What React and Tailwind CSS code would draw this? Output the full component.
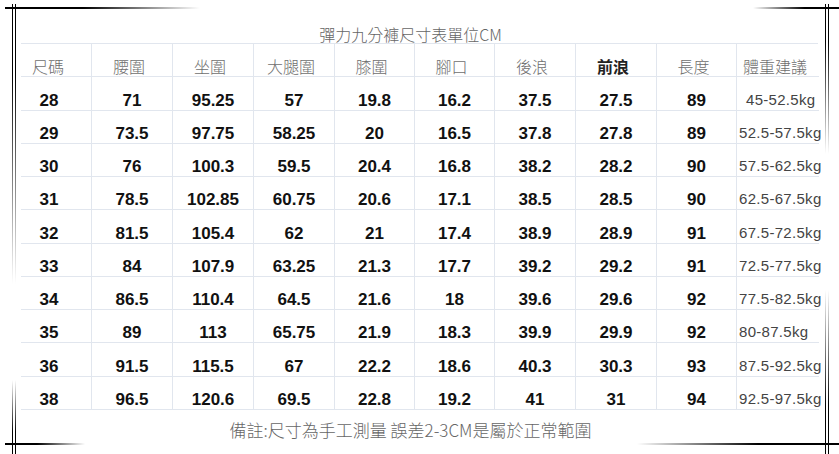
const headers = ['尺碼', '腰圍', '坐圍', '大腿圍', '膝圍', '腳口', '後浪', '前浪', '長度', '體重建議']

const rows = [
  ['28', '71', '95.25', '57', '19.8', '16.2', '37.5', '27.5', '89', '45-52.5kg'],
  ['29', '73.5', '97.75', '58.25', '20', '16.5', '37.8', '27.8', '89', '52.5-57.5kg'],
  ['30', '76', '100.3', '59.5', '20.4', '16.8', '38.2', '28.2', '90', '57.5-62.5kg'],
  ['31', '78.5', '102.85', '60.75', '20.6', '17.1', '38.5', '28.5', '90', '62.5-67.5kg'],
  ['32', '81.5', '105.4', '62', '21', '17.4', '38.9', '28.9', '91', '67.5-72.5kg'],
  ['33', '84', '107.9', '63.25', '21.3', '17.7', '39.2', '29.2', '91', '72.5-77.5kg'],
  ['34', '86.5', '110.4', '64.5', '21.6', '18', '39.6', '29.6', '92', '77.5-82.5kg'],
  ['35', '89', '113', '65.75', '21.9', '18.3', '39.9', '29.9', '92', '80-87.5kg'],
  ['36', '91.5', '115.5', '67', '22.2', '18.6', '40.3', '30.3', '93', '87.5-92.5kg'],
  ['38', '96.5', '120.6', '69.5', '22.8', '19.2', '41', '31', '94', '92.5-97.5kg'],
]

const cjk = { fontFamily: '"Noto Sans CJK TC", "Noto Sans CJK SC", sans-serif' }
const num = { fontFamily: '"Liberation Sans", Arial, sans-serif' }

// decorative corner frame, drawn over the whole page
function Frame() {
  return (
    <svg className="absolute inset-0 pointer-events-none" width="839" height="454" viewBox="0 0 839 454">
      <defs>
        <linearGradient id="toR" x1="0" x2="1" y1="0" y2="0">
          <stop offset="0.4" stopColor="#000" />
          <stop offset="1" stopColor="#000" stopOpacity="0" />
        </linearGradient>
        <linearGradient id="toL" x1="1" x2="0" y1="0" y2="0">
          <stop offset="0.4" stopColor="#000" />
          <stop offset="1" stopColor="#000" stopOpacity="0" />
        </linearGradient>
        <linearGradient id="toB" x1="0" x2="0" y1="0" y2="1">
          <stop offset="0.25" stopColor="#000" />
          <stop offset="1" stopColor="#000" stopOpacity="0" />
        </linearGradient>
        <linearGradient id="toT" x1="0" x2="0" y1="1" y2="0">
          <stop offset="0.3" stopColor="#000" />
          <stop offset="1" stopColor="#000" stopOpacity="0" />
        </linearGradient>
      </defs>
      {/* top left */}
      <rect x="5" y="7" width="195" height="2" fill="url(#toR)" />
      <rect x="12" y="4" width="1" height="280" fill="url(#toB)" />
      <rect x="15" y="4" width="1" height="280" fill="url(#toB)" />
      {/* bottom left */}
      <rect x="5" y="443" width="80" height="2" fill="url(#toR)" />
      <rect x="12" y="380" width="1" height="74" fill="url(#toT)" />
      <rect x="15" y="380" width="1" height="74" fill="url(#toT)" />
      {/* top right */}
      <rect x="753" y="7" width="86" height="2" fill="url(#toL)" />
      <rect x="825" y="4" width="1" height="150" fill="url(#toB)" />
      <rect x="828" y="4" width="1" height="150" fill="url(#toB)" />
      {/* bottom right */}
      <rect x="637" y="443" width="202" height="2" fill="url(#toL)" />
      <rect x="825" y="290" width="1" height="164" fill="url(#toT)" />
      <rect x="828" y="290" width="1" height="164" fill="url(#toT)" />
    </svg>
  )
}

export default function App() {
  return (
    <div className="relative w-[839px] h-[454px] bg-white overflow-hidden">
      <div className="flex flex-col px-[21px]">
        {/* title */}
        <div className="h-[43px] flex items-end justify-center pr-[18px] pb-[1px]">
          <span className="text-[16px] leading-[16px] text-[#666] font-light" style={cjk}>
            彈力九分褲尺寸表單位CM
          </span>
        </div>

        {/* table */}
        <div className="grid grid-cols-[70px_81px_81px_81px_80px_80px_81px_81px_80px_83px] border-t border-[#e1e6ee]">
          {headers.map((h, i) => (
            <div
              key={h}
              className={`h-[33.25px] flex items-end border-b border-[#e1e6ee] pb-[2px] ${i > 0 ? 'border-l justify-center pr-[6px]' : 'justify-center pr-[16px]'}`}
            >
              <span
                className={`text-[16px] leading-[16px] ${h === '前浪' ? 'font-bold text-[#222]' : 'font-light text-[#6e6e6e]'}`}
                style={cjk}
              >
                {h}
              </span>
            </div>
          ))}

          {rows.map((r, ri) =>
            r.map((v, ci) => {
              if (ci === 9) {
                return (
                  <div
                    key={ri + '-' + ci}
                    className={`h-[33.25px] flex items-end border-l border-b border-[#e1e6ee] pb-[3px] ${ri === 0 ? 'pl-[9px]' : 'pl-[2px]'}`}
                  >
                    <span className="text-[15px] leading-[15px] text-[#444] tracking-[0.3px] whitespace-nowrap" style={num}>
                      {v}
                    </span>
                  </div>
                )
              }
              return (
                <div
                  key={ri + '-' + ci}
                  className={`h-[33.25px] flex items-end justify-center border-b border-[#e1e6ee] pb-[1px] ${ci > 0 ? 'border-l' : 'pr-[14px]'}`}
                >
                  <span className="text-[17px] leading-[17px] font-bold text-[#111]" style={num}>
                    {v}
                  </span>
                </div>
              )
            })
          )}
        </div>

        {/* footer note */}
        <div className="flex justify-center pt-[11px] pr-[18px]">
          <span className="text-[17px] leading-[17px] text-[#666] font-light" style={cjk}>
            備註:尺寸為手工測量 誤差2-3CM是屬於正常範圍
          </span>
        </div>
      </div>

      <Frame />
    </div>
  )
}
